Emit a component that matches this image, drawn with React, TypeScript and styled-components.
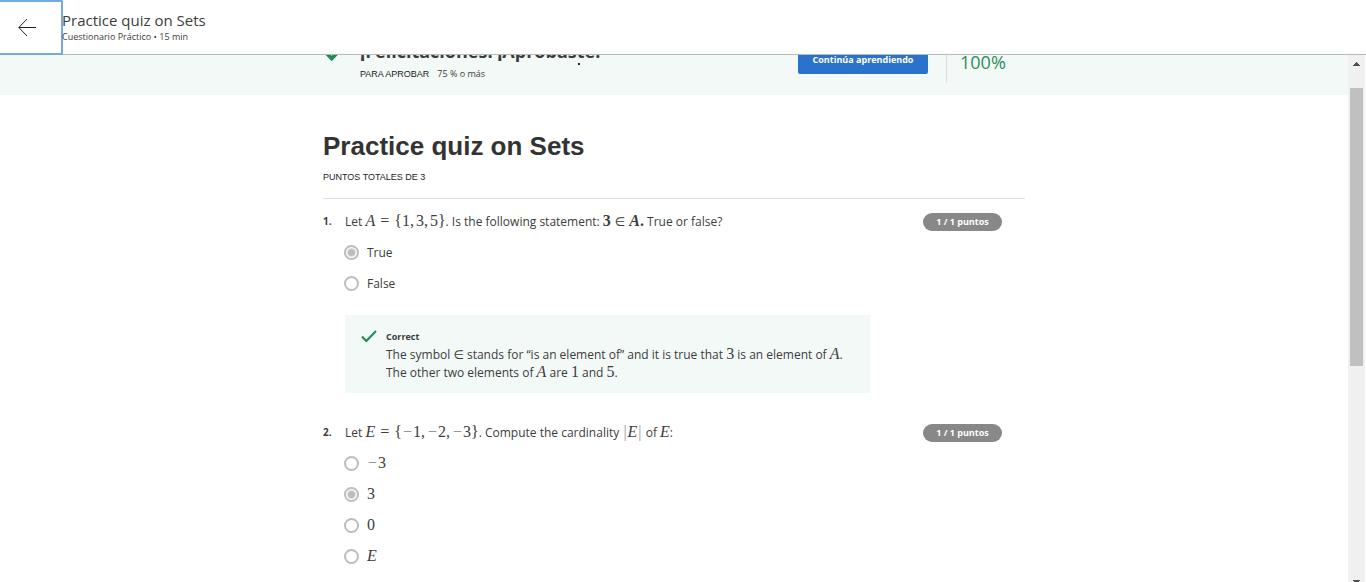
import React from "react";
import styled, { createGlobalStyle } from "styled-components";

const GlobalStyle = createGlobalStyle`
  * { box-sizing: border-box; }
  body {
    margin: 0;
    background: #fff;
    color: #3c3c3c;
    font-family: "Open Sans", "Liberation Sans", sans-serif;
    font-size: 12px;
  }
`;

const Page = styled.div`
  display: flex;
  flex-direction: column;
  height: 100vh;
  overflow: hidden;
`;

const Header = styled.header`
  display: flex;
  flex: none;
  align-items: flex-start;
  height: 55px;
  border-bottom: 1px solid #b8b8b8;
`;

const BackButton = styled.button`
  display: flex;
  align-items: center;
  justify-content: center;
  width: 63px;
  height: 55px;
  margin-right: -1px;
  padding: 0 7px 1px 0;
  border: 2px solid #73a9e6;
  border-left: 0;
  border-radius: 0 2px 2px 0;
  background: #fff;
  color: #222;
`;

const HeaderText = styled.div`
  padding-top: 10px;
`;

const HeaderTitle = styled.div`
  font-size: 15px;
  line-height: 20px;
`;

const HeaderMeta = styled.div`
  font-size: 9px;
  line-height: 14px;
`;

const Body = styled.div`
  display: flex;
  flex: 1;
  min-height: 0;
  padding-right: 1px;
`;

const Content = styled.main`
  flex: 1;
  min-width: 0;
  overflow: hidden;
`;

const Banner = styled.section`
  display: flex;
  justify-content: center;
  align-items: flex-end;
  height: 40px;
  overflow: hidden;
  background: #f3f9f7;
`;

const BannerInner = styled.div`
  display: flex;
  align-items: flex-end;
  width: 100%;
  max-width: 702px;
  padding-bottom: 12px;
`;

const BannerIcon = styled.div`
  flex: none;
  width: 37px;
  padding: 0 0 22px 2px;
  line-height: 0;
`;

const BannerMessage = styled.div`
  position: relative;
  flex: 1;
`;

const BannerTitle = styled.h2`
  margin: 0 0 3px;
  font-size: 18px;
  line-height: 22px;
  font-weight: 700;
`;

const Requirement = styled.div`
  font-size: 9px;
  line-height: 18px;
`;

const Caps = styled.span`
  margin-right: 8px;
  color: #222;
  font-family: "Liberation Sans", sans-serif;
`;

const Speck = styled.span`
  position: absolute;
  left: 218px;
  bottom: 18px;
  width: 2px;
  height: 2px;
  background: #222;
`;

const ContinueButton = styled.button`
  width: 130px;
  height: 36px;
  margin: 0 18px 9px 0;
  padding: 7px 0 0;
  border: 0;
  border-radius: 2px;
  background: #2a73cc;
  color: #fff;
  font: 700 9px/16px "Open Sans", sans-serif;
`;

const Grade = styled.div`
  width: 79px;
  height: 60px;
  padding: 26px 0 0 13px;
  border-left: 1px solid #ddd;
  color: #2a8f5b;
  font-size: 18px;
  line-height: 26px;
`;

const Quiz = styled.section`
  width: 100%;
  max-width: 702px;
  margin: 0 auto;
  padding-top: 36px;
`;

const QuizTitle = styled.h1`
  margin: 0;
  color: #333;
  font-family: "Liberation Sans", sans-serif;
  font-size: 26px;
  line-height: 30px;
`;

const QuizPoints = styled.div`
  margin-top: 9px;
  padding-bottom: 14px;
  border-bottom: 1px solid #e0e0e0;
  color: #222;
  font-family: "Liberation Sans", sans-serif;
  font-size: 9px;
  line-height: 14px;
`;

const QuestionRow = styled.article`
  display: grid;
  grid-template-columns: 22px 1fr 79px;
  padding: 13px 23px 0 0;
  margin-bottom: 17px;
`;

const QuestionNumber = styled.div`
  font-size: 10px;
  line-height: 18px;
  font-weight: 700;
`;

const Prompt = styled.div`
  font-size: 12px;
  line-height: 20px;
`;

const Badge = styled.div`
  align-self: start;
  height: 18px;
  margin-top: 1px;
  border-radius: 9px;
  background: #888;
  color: #fff;
  font-size: 9px;
  line-height: 18px;
  font-weight: 700;
  text-align: center;
`;

const Option = styled.label`
  display: flex;
  align-items: center;
  gap: 8px;
  height: 31px;
`;

const Radio = styled.input`
  appearance: none;
  flex: none;
  width: 15px;
  height: 15px;
  margin: 0;
  border: 2px solid #bdbdbd;
  border-radius: 50%;
  background: #fff;
  &:checked {
    background: radial-gradient(circle, #bdbdbd 0 3px, #fff 5px);
  }
`;

const Options = styled.div`
  margin-left: -1px;
  padding-top: 5px;
`;

const Feedback = styled.div`
  display: flex;
  align-items: flex-start;
  gap: 9px;
  width: 525px;
  max-width: 100%;
  min-height: 78px;
  margin-top: 16px;
  padding: 13px 16px 11px;
  background: #f3f9f7;
  svg { flex: none; margin-top: 2px; }
`;

const FeedbackTitle = styled.div`
  font-size: 9px;
  line-height: 18px;
  font-weight: 700;
`;

const FeedbackText = styled.div`
  font-size: 12px;
  line-height: 18px;
`;

const MathText = styled.span<{ $bold?: boolean }>`
  font-family: "Liberation Serif", serif;
  font-size: 16px;
  line-height: 1px;
  font-weight: ${(p) => (p.$bold ? 700 : 400)};
`;

const Rel = styled.span`
  margin: 0 5px;
`;

const Comma = styled.span`
  margin-right: 2px;
`;

const ElementSign = styled.span`
  font-family: "DejaVu Sans", sans-serif;
  font-size: 12px;
  line-height: 1px;
  font-weight: 400;
`;

const Minus = styled.span`
  margin: 0 1px;
  color: #888;
`;

const Bar = styled.span`
  margin: 0 1px;
  color: #999;
`;

const Scrollbar = styled.div`
  display: flex;
  flex: none;
  flex-direction: column;
  align-items: center;
  width: 17px;
  background: #f0f0f0;
`;

const Thumb = styled.div`
  width: 13px;
  height: 278px;
  margin-top: 22px;
  background: #c0c0c0;
`;

const ScrollArrow = styled.svg<{ $down?: boolean }>`
  flex: none;
  margin-top: ${(p) => (p.$down ? "auto" : "7px")};
`;

const Check = ({ large }: { large?: boolean }) => (
  <svg width={large ? 20 : 16} height={large ? 16 : 13} viewBox="0 0 16 13" fill="none" stroke="#1d8a54" strokeWidth={large ? 3 : 2} aria-hidden="true">
    <path d="M1 6.5 5.3 11 15 1" />
  </svg>
);

const Choice = ({ name, checked, children }: { name: string; checked?: boolean; children: React.ReactNode }) => (
  <Option>
    <Radio type="radio" name={name} defaultChecked={checked} />
    <span>{children}</span>
  </Option>
);

const Question = ({ number, prompt, children }: { number: number; prompt: React.ReactNode; children: React.ReactNode }) => (
  <QuestionRow>
    <QuestionNumber>{number}.</QuestionNumber>
    <div>
      <Prompt>{prompt}</Prompt>
      {children}
    </div>
    <Badge>1 / 1 puntos</Badge>
  </QuestionRow>
);

export default function App() {
  return (
    <Page>
      <GlobalStyle />
      <Header>
        <BackButton aria-label="Atrás">
          <svg width="18" height="18" viewBox="0 0 18 18" fill="none" stroke="currentColor" aria-hidden="true">
            <path d="M.8 9.5H18M9 1 .8 9.5 9 18" />
          </svg>
        </BackButton>
        <HeaderText>
          <HeaderTitle>Practice quiz on Sets</HeaderTitle>
          <HeaderMeta>Cuestionario Práctico • 15 min</HeaderMeta>
        </HeaderText>
      </Header>
      <Body>
        <Content>
          <Banner>
            <BannerInner>
              <BannerIcon><Check large /></BannerIcon>
              <BannerMessage>
                <BannerTitle>¡Felicitaciones! ¡Aprobaste!</BannerTitle>
                <Requirement><Caps>PARA APROBAR</Caps>75 % o más</Requirement>
                <Speck />
              </BannerMessage>
              <ContinueButton>Continúa aprendiendo</ContinueButton>
              <Grade>100%</Grade>
            </BannerInner>
          </Banner>
          <Quiz>
            <QuizTitle>Practice quiz on Sets</QuizTitle>
            <QuizPoints>PUNTOS TOTALES DE 3</QuizPoints>
            <Question
              number={1}
              prompt={
                <>
                  Let <MathText><i>A</i><Rel>=</Rel>{"{"}1<Comma>,</Comma>3<Comma>,</Comma>5{"}"}</MathText>. Is the following statement:{" "}
                  <MathText $bold>3 <ElementSign>∈</ElementSign> <i>A</i>.</MathText> True or false?
                </>
              }
            >
              <Options>
                <Choice name="q1" checked>True</Choice>
                <Choice name="q1">False</Choice>
              </Options>
              <Feedback>
                <Check />
                <div>
                  <FeedbackTitle>Correct</FeedbackTitle>
                  <FeedbackText>
                    The symbol <ElementSign>∈</ElementSign> stands for “is an element of” and it is true that <MathText>3</MathText> is an element of{" "}
                    <MathText><i>A</i></MathText>.<br />
                    The other two elements of <MathText><i>A</i></MathText> are <MathText>1</MathText> and <MathText>5</MathText>.
                  </FeedbackText>
                </div>
              </Feedback>
            </Question>
            <Question
              number={2}
              prompt={
                <>
                  Let <MathText><i>E</i><Rel>=</Rel>{"{"}<Minus>−</Minus>1<Comma>,</Comma><Minus>−</Minus>2<Comma>,</Comma><Minus>−</Minus>3{"}"}</MathText>. Compute the cardinality{" "}
                  <MathText><Bar>|</Bar><i>E</i><Bar>|</Bar></MathText> of <MathText><i>E</i></MathText>:
                </>
              }
            >
              <Options>
                <Choice name="q2"><MathText><Minus>−</Minus>3</MathText></Choice>
                <Choice name="q2" checked><MathText>3</MathText></Choice>
                <Choice name="q2"><MathText>0</MathText></Choice>
                <Choice name="q2"><MathText><i>E</i></MathText></Choice>
              </Options>
            </Question>
          </Quiz>
        </Content>
        <Scrollbar aria-hidden="true">
          <ScrollArrow width="7" height="4" viewBox="0 0 7 4"><path d="M3 0h1v1h1v1h1v1h1v1H0V3h1V2h1V1h1z" fill="#505050" /></ScrollArrow>
          <Thumb />
          <ScrollArrow $down width="7" height="2" viewBox="0 0 7 2"><path d="M0 0h7v1H6v1H1V1H0z" fill="#505050" /></ScrollArrow>
        </Scrollbar>
      </Body>
    </Page>
  );
}
